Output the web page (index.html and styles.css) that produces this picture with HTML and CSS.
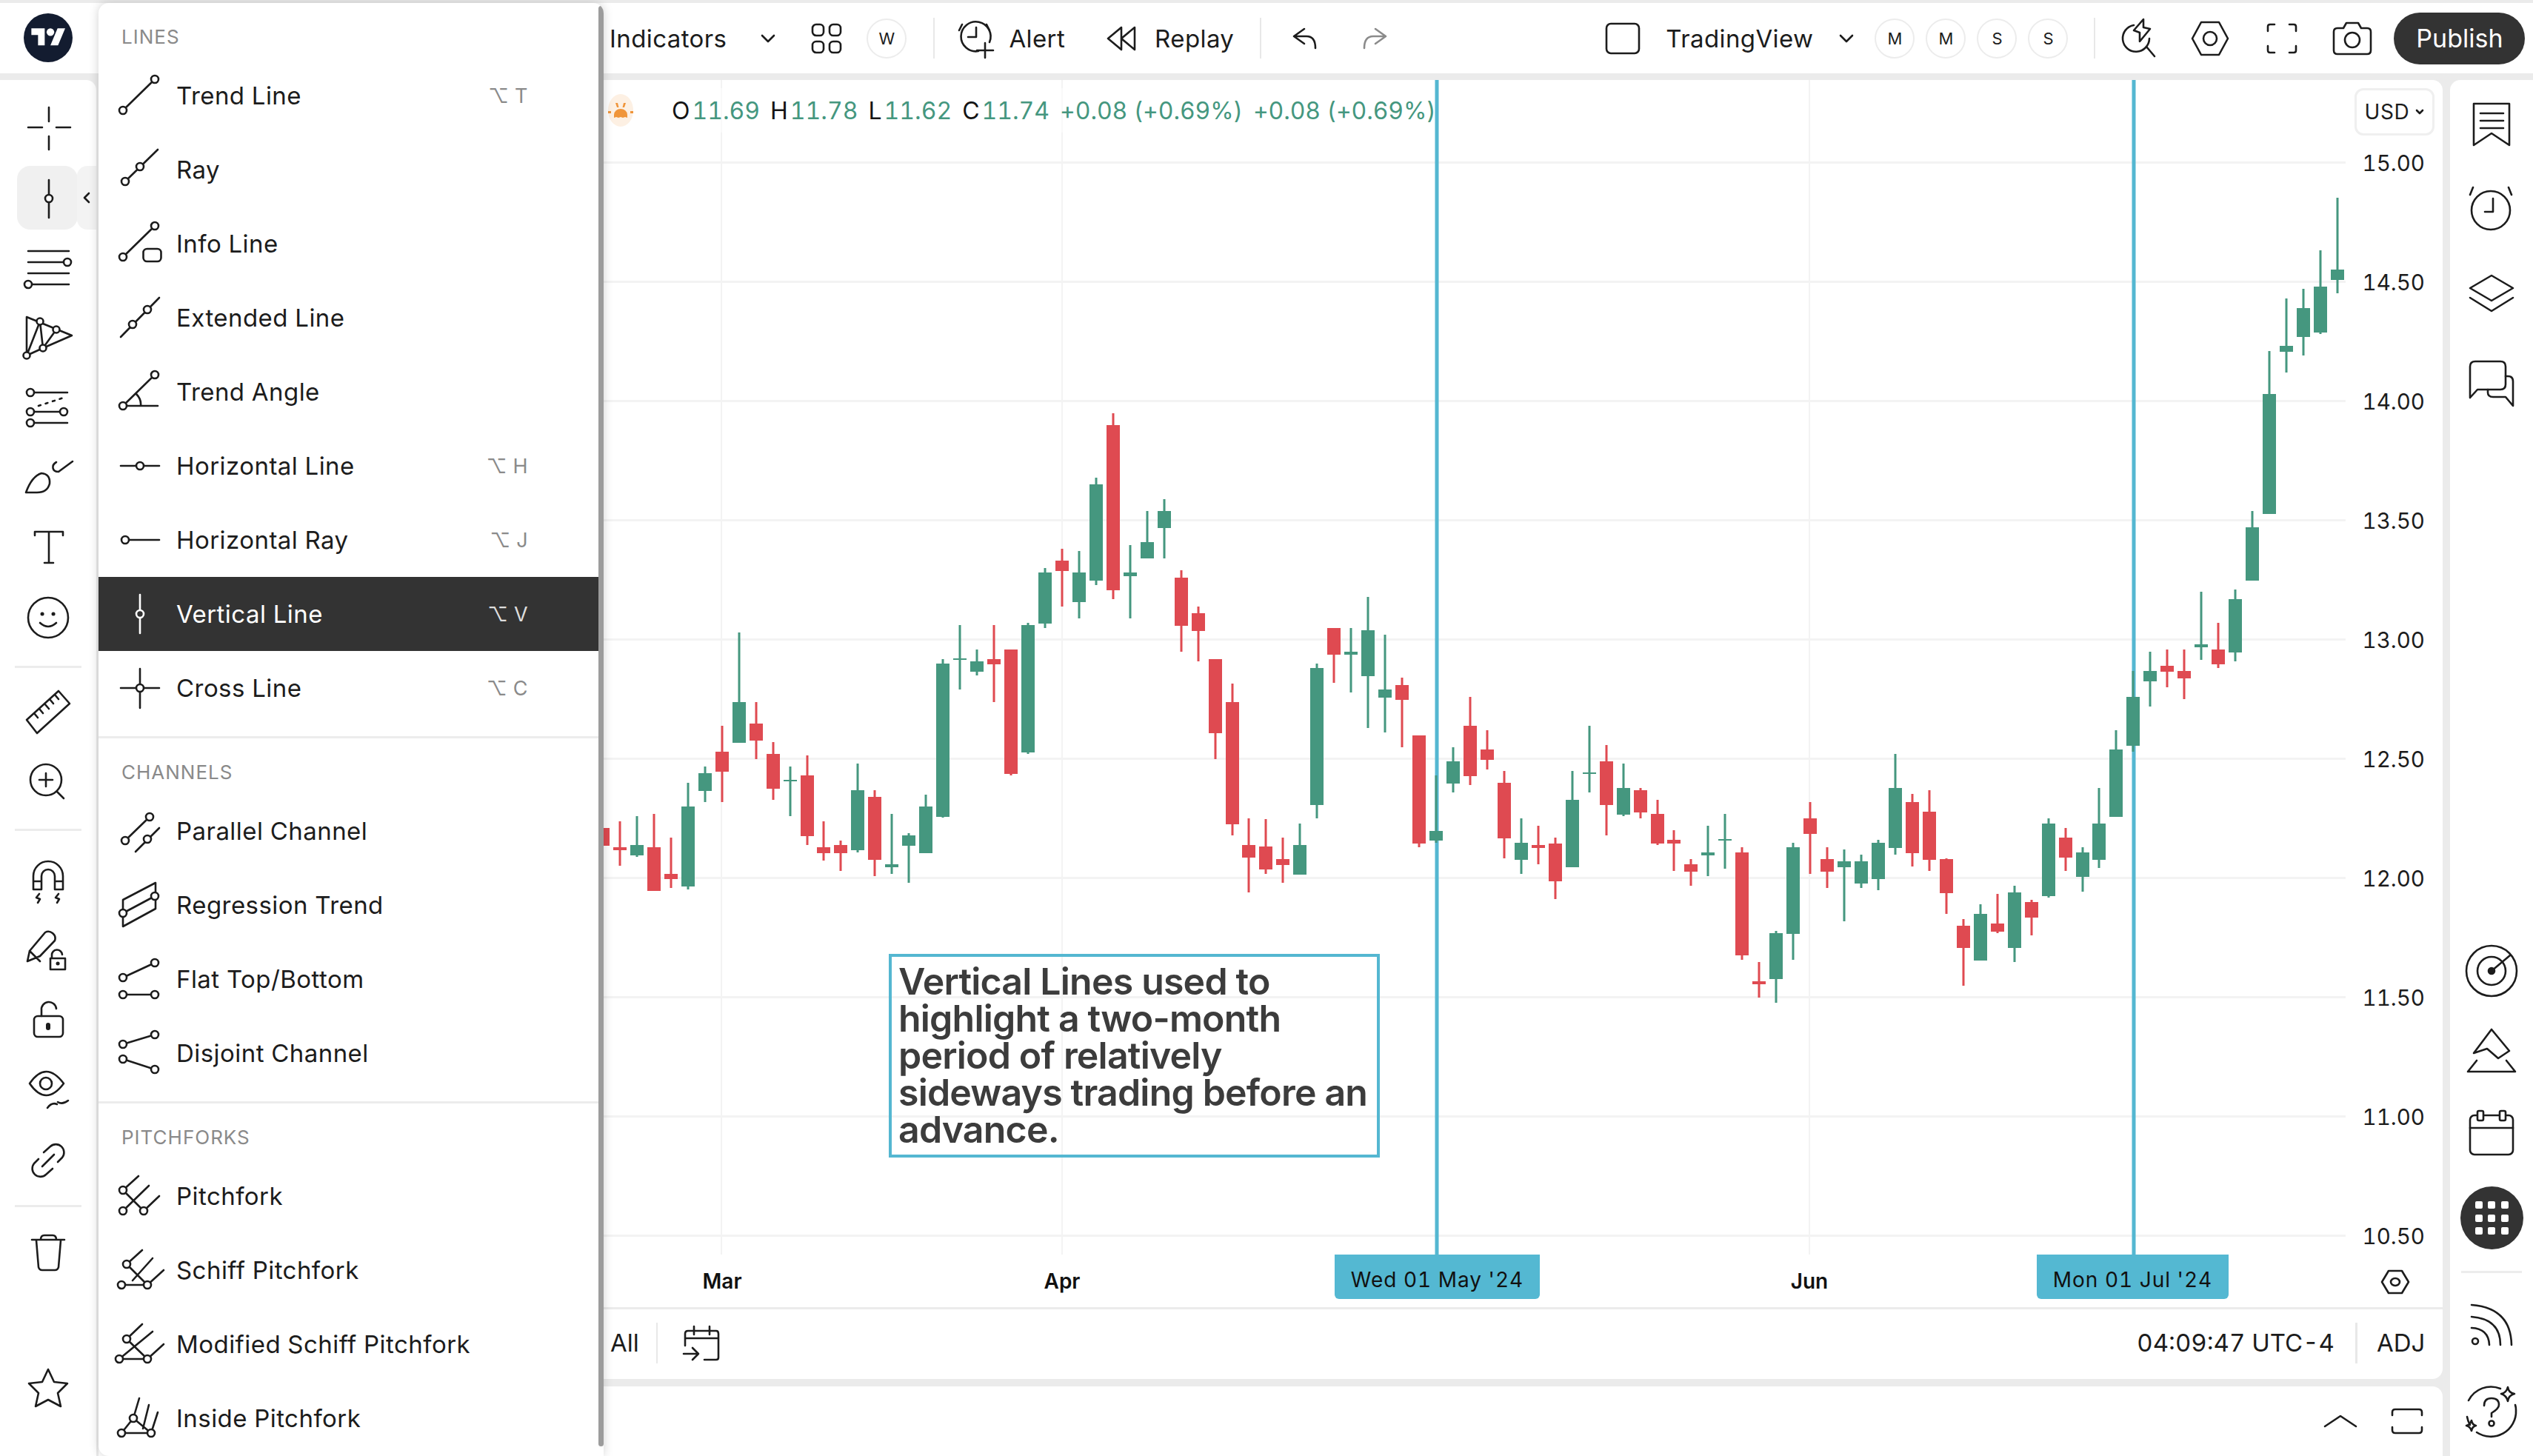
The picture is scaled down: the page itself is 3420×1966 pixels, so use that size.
FILE: index.html
```html
<!DOCTYPE html>
<html lang="en">
<head>
    <meta charset="UTF-8">
    <title>Drawing tools - Vertical Line</title>
    <link rel="stylesheet" href="styles.css">
</head>
<body>
<div class="app">
    <header class="top">
        <div class="logo-cell">
            <div class="logo">
                <svg viewBox="0 0 36 28" width="47" height="36"><path fill="#fff" d="M14 22H7V11H0V4h14v18zM28 22h-8l7.500-18h8L28 22z"/><circle fill="#fff" cx="20" cy="8" r="4"/></svg>
            </div>
        </div>
        <div class="topbar">
            <span class="tb-text indicators">Indicators</span>
            <svg class="ico chev-a" viewBox="0 0 20 12" width="20" height="12"><path d="M2 2l8 8 8-8"/></svg>
            <svg class="ico grid-ico" viewBox="0 0 42 42" width="42" height="42"><rect x="2" y="2" width="15" height="15" rx="5"/><rect x="25" y="2" width="15" height="15" rx="5"/><rect x="2" y="25" width="15" height="15" rx="5"/><rect x="25" y="25" width="15" height="15" rx="5"/></svg>
            <span class="pill-btn w-btn">W</span>
            <span class="tb-sep sep-a"></span>
            <svg class="ico alert-ico" viewBox="0 0 50 54" width="50" height="54"><path d="M27 44a20 20 0 1 1 15-12"/><path d="M24 12v13H13"/><path d="M5 8L1 16M38 8l4 8"/><path d="M25 43h22M36 33v20"/></svg>
            <span class="tb-text alert-label">Alert</span>
            <svg class="ico replay-ico" viewBox="0 0 40 34" width="40" height="34"><path d="M20 2L2 17l18 15zM38 2L20 17l18 15z"/></svg>
            <span class="tb-text replay-label">Replay</span>
            <span class="tb-sep sep-b"></span>
            <svg class="ico undo-ico" viewBox="0 0 34 30" width="34" height="30"><path d="M17 2L3 12l14 10M3 12h17q12 0 12 16"/></svg>
            <svg class="ico redo-ico" viewBox="0 0 34 30" width="34" height="30"><path d="M17 2l14 10-14 10M31 12H14q-12 0-12 16"/></svg>
            <svg class="ico square-ico" viewBox="0 0 48 44" width="48" height="44"><rect x="2" y="2" width="44" height="40" rx="6"/></svg>
            <span class="tb-text brand">TradingView</span>
            <svg class="ico chev-b" viewBox="0 0 20 12" width="20" height="12"><path d="M2 2l8 8 8-8"/></svg>
            <span class="pill-btn m-first">M</span>
            <span class="pill-btn">M</span>
            <span class="pill-btn">S</span>
            <span class="pill-btn">S</span>
            <span class="tb-sep sep-c"></span>
            <svg class="ico bolt-ico" viewBox="0 0 48 54" width="48" height="54"><path d="M17 9A18 18 0 1 0 38 27"/><path d="M30 1L17 16l8 3v12l14-17-9-2zM34 38l11 13"/></svg>
            <svg class="ico hex-ico" viewBox="0 0 52 48" width="52" height="48"><path d="M14 2h24l12 22-12 22H14L2 24z"/><circle cx="26" cy="24" r="9"/></svg>
            <svg class="ico full-ico" viewBox="0 0 42 42" width="42" height="42"><path d="M2 11V5q0-3 3-3h6M31 2h6q3 0 3 3v6M40 31v6q0 3-3 3h-6M11 40H5q-3 0-3-3v-6"/></svg>
            <svg class="ico cam-ico" viewBox="0 0 54 46" width="54" height="46"><path d="M15 9l4-7h16l4 7h8q5 0 5 5v25q0 5-5 5H7q-5 0-5-5V14q0-5 5-5z"/><circle cx="27" cy="25" r="10"/></svg>
            <button class="publish">Publish</button>
        </div>
    </header>

    <div class="main">
        <nav class="left-tools">
            <div class="tool-group group-a">
                <div class="tool"><svg class="ico" viewBox="0 0 64 64"><path d="M5 32h19M43 32h19M33 5v19M33 44v18"/></svg></div>
                <div class="tool is-active">
                    <svg class="ico" viewBox="0 0 64 64"><path d="M33 8v51"/><circle cx="33" cy="33" r="5"/></svg>
                    <span class="tool-tab"><svg class="ico" viewBox="0 0 12 16" width="12" height="16"><path d="M9 2L3 8l6 6"/></svg></span>
                </div>
                <div class="tool"><svg class="ico" viewBox="0 0 64 64"><path d="M5 10h55M5 25h54M5 40h55M5 55h55"/><circle cx="58" cy="25" r="5"/><circle cx="5" cy="55" r="5"/></svg></div>
                <div class="tool"><svg class="ico" viewBox="0 0 64 64"><path d="M3 56V4l61 25-39 17zM3 56L21 10 25 46 43 21"/><circle cx="21" cy="10" r="4.500"/><circle cx="43" cy="21" r="4.500"/><circle cx="25" cy="46" r="4.500"/><circle cx="3" cy="56" r="4.500"/></svg></div>
                <div class="tool"><svg class="ico" viewBox="0 0 64 64"><path d="M8 12h50M8 38h46M8 53h50"/><path stroke-dasharray="3 7" d="M19 30l37-12"/><circle cx="8" cy="12" r="5"/><circle cx="8" cy="38" r="5"/><circle cx="53" cy="38" r="5"/><circle cx="8" cy="53" r="5"/></svg></div>
                <div class="tool"><svg class="ico" viewBox="0 0 64 64"><path d="M2 52Q10 30 23 26 35 27 34 40 31 52 17 52zM43 11C36 15 37 24 46 24L65 10"/></svg></div>
                <div class="tool"><svg class="ico" viewBox="0 0 64 64"><path d="M14 16v-5h38v5M33 11v42M27 53h12"/></svg></div>
                <div class="tool"><svg class="ico" viewBox="0 0 64 64"><circle cx="32" cy="32" r="27"/><path d="M21 39q11 10 22 0"/><path class="solid" d="M24 27h.1M39 27h.1"/></svg></div>
            </div>
            <div class="tool-group group-b">
                <div class="tool"><svg class="ico" viewBox="0 0 64 64"><path d="M3 44L46 5l15 17-44 40zM13 35l5 6M20 29l5 6M27 22l6 7M34 16l5 6M41 10l5 6"/></svg></div>
                <div class="tool"><svg class="ico" viewBox="0 0 64 64"><circle cx="29" cy="30" r="21"/><path d="M44 46l9 9M29 21v18M20 30h18"/></svg></div>
            </div>
            <div class="tool-group group-c">
                <div class="tool"><svg class="ico" viewBox="0 0 64 64"><path d="M12 44V26a20 20 0 0 1 40 0v18H41V26a9 9 0 0 0-18 0v18zM12 33h11M41 33h11M20 50l-4 5 5 2-3 5M46 50l-4 5 5 2-3 5"/></svg></div>
                <div class="tool"><svg class="ico" viewBox="0 0 64 64"><path d="M4 46L7 32 28 7q5-3 10 1t3 10L21 39zM7 32l14 14M4 46l17-7M37 42v-4a7 7 0 0 1 14-1M35 42h20v15H35z"/><path class="solid" d="M45 49h.1"/></svg></div>
                <div class="tool"><svg class="ico" viewBox="0 0 64 64"><rect x="13" y="26" width="39" height="28" rx="5"/><path d="M23 26v-8a10 10 0 0 1 20-2"/><path class="solid thick" d="M32 38v4"/></svg></div>
                <div class="tool"><svg class="ico" viewBox="0 0 64 64"><path d="M7 22q22-32 46 0-24 32-46 0z"/><circle cx="29" cy="22" r="8"/><path d="M31 55q6-8 13-5M45 47q6 4 14-2"/></svg></div>
                <div class="tool"><svg class="ico" viewBox="0 0 64 64"><path d="M26 21l9-8a11 11 0 0 1 16 15l-6 6M38 43l-9 8a11 11 0 0 1-16-15l6-6M24 40l16-16"/></svg></div>
            </div>
            <div class="tool-group is-last">
                <div class="tool"><svg class="ico" viewBox="0 0 64 64"><path d="M10 14h44M16 15l3 36q1 4 5 4h17q4 0 5-4l3-36M22 14q0-6 5-6h11q5 0 5 6"/></svg></div>
            </div>
            <div class="tool tool-star"><svg class="ico" viewBox="0 0 64 64"><path d="M32 7l8 17 18 2-13 13 4 18-17-9-17 9 4-18L6 26l18-2z"/></svg></div>
        </nav>

        <div class="center">
            <section class="chart">
                <div class="plot">
                    <div class="pane" id="pane">
                        <svg class="pane-svg" id="paneSvg" viewBox="133 108 3034 1586" width="3034" height="1586"></svg>
                        <div class="legend">
                            <span class="sun">
                                <svg viewBox="0 0 34 20" width="34" height="20" fill="#f0953a"><path d="M8 20v-4a9 8 0 0 1 18 0v4l-3-1-3 1-3-1-3 1-3-1z"/><path d="M12 6L10 0h3l1.500 6zM22 6l2-6h-3l-1.500 6zM0 11h4v3H0zM30 11h4v3h-4z"/></svg>
                            </span>
                            <span class="ohlc"><b>O</b>11.69</span>
                            <span class="ohlc"><b>H</b>11.78</span>
                            <span class="ohlc"><b>L</b>11.62</span>
                            <span class="ohlc"><b>C</b>11.74</span>
                            <span class="ohlc chg">+0.08 (+0.69%)</span>
                            <span class="ohlc chg">+0.08 (+0.69%)</span>
                        </div>
                        <div class="note">Vertical Lines used to highlight a two-month period of relatively sideways trading before an advance.</div>
                    </div>
                    <div class="price-axis">
                        <button class="usd">USD <svg class="ico" viewBox="0 0 12 8" width="12" height="8"><path d="M2 2l4 4 4-4"/></svg></button>
                        <span class="price">15.00</span>
                        <span class="price">14.50</span>
                        <span class="price">14.00</span>
                        <span class="price">13.50</span>
                        <span class="price">13.00</span>
                        <span class="price">12.50</span>
                        <span class="price">12.00</span>
                        <span class="price">11.50</span>
                        <span class="price">11.00</span>
                        <span class="price">10.50</span>
                    </div>
                </div>
                <div class="time-axis">
                    <span class="month m-mar">Mar</span>
                    <span class="month m-apr">Apr</span>
                    <span class="month m-jun">Jun</span>
                    <span class="date-tag tag-may">Wed 01 May '24</span>
                    <span class="date-tag tag-jul">Mon 01 Jul '24</span>
                    <svg class="ico axis-gear" viewBox="0 0 40 34" width="40" height="34"><path d="M11 2h18l9 15-9 15H11L2 17z"/><ellipse cx="20" cy="17" rx="6" ry="5"/></svg>
                </div>
                <div class="range-bar">
                    <span class="range-all">All</span>
                    <svg class="ico range-ico" viewBox="0 0 50 48" width="50" height="48"><path d="M3 28V12q0-4 4-4h38q3 0 3 4v32q0 3-3 3H29M3 18h45M15 2v11M36 2v11M1 39h20M13 31l8 8-8 8"/></svg>
                    <span class="clock">04:09:47 UTC-4</span>
                    <span class="adj">ADJ</span>
                </div>
            </section>
            <section class="bottom-panel">
                <svg class="ico" viewBox="0 0 46 18" width="46" height="18"><path d="M2 16L23 2l21 14"/></svg>
                <svg class="ico" viewBox="0 0 44 36" width="44" height="36"><path d="M2 10V6q0-4 4-4h32q4 0 4 4v4M42 26v4q0 4-4 4H6q-4 0-4-4v-4"/></svg>
            </section>
        </div>

        <aside class="right-tools">
            <div class="side-btn s-notes"><svg class="ico" viewBox="0 0 64 64"><path d="M8 4h48v56L32 44 8 60zM17 17h31M17 27h31M17 37h31"/></svg></div>
            <div class="side-btn s-alarm"><svg class="ico" viewBox="0 0 64 64"><circle cx="31" cy="34" r="26"/><path d="M34 18v18H23M3 13L7 3M59 13L55 3"/></svg></div>
            <div class="side-btn s-layers"><svg class="ico" viewBox="0 0 64 64"><path d="M32 8l29 17-29 17L3 25zM3 38l29 18 29-18"/></svg></div>
            <div class="side-btn s-chat"><svg class="ico" viewBox="0 0 64 64"><path d="M3 53V11q0-7 7-7h34q7 0 7 7v24q0 7-7 7H13z"/><path d="M51 24h3q7 0 7 7v33L51 52H34q-7 0-7-6v-4"/></svg></div>
            <div class="side-spacer"></div>
            <div class="side-btn s-radar"><svg class="ico" viewBox="0 0 74 74"><circle cx="37" cy="37" r="34"/><circle cx="37" cy="37" r="19"/><circle class="dot" cx="37" cy="37" r="4"/><path d="M37 37l25-21"/></svg></div>
            <div class="side-btn s-ideas"><svg class="ico" viewBox="0 0 64 64"><path d="M32 3L8 35l18-6 15 13 15-10zM12 45L0 60h64L52 45"/></svg></div>
            <div class="side-btn s-cal"><svg class="ico" viewBox="0 0 64 64"><rect x="3" y="8" width="58" height="53" rx="6"/><path d="M3 25h58"/><rect class="tab" x="13" y="2" width="8" height="13" rx="2"/><rect class="tab" x="43" y="2" width="8" height="13" rx="2"/></svg></div>
            <div class="dots-btn">
                <i></i><i></i><i></i><i></i><i></i><i></i><i></i><i></i><i></i>
            </div>
            <div class="side-rule"></div>
            <div class="side-btn s-signal"><svg class="ico" viewBox="0 0 64 64"><path d="M5 36q23 1 24 23M5 21q39 3 39 38M5 5q53 4 54 54"/><circle cx="10" cy="54" r="4"/></svg></div>
            <div class="side-btn s-help"><svg class="ico" viewBox="0 0 76 76"><path d="M50 7A34 34 0 0 0 7 23M5 45q1 6 4 11M18 66a34 34 0 0 0 53-30q0-4-1-7"/><path d="M60 5q1 8 9 9-8 2-9 10-2-8-9-10 7-1 9-9zM11 50q1 6 6 7-5 1-6 7-2-6-7-7 5-1 7-7z"/><path d="M28 30q0-10 10-10t10 9q0 5-10 11v5"/><circle cx="38" cy="54" r="3.500"/></svg></div>
        </aside>
    </div>

    <!-- drawing tools flyout, lies over the chart -->
    <div class="flyout">
        <div class="menu">
            <div class="menu-section">
                <div class="menu-title">Lines</div>
                <div class="menu-row"><svg class="ico" viewBox="0 0 60 60"><path d="M8 50L51 8"/><circle cx="8" cy="50" r="5"/><circle cx="51" cy="8" r="5"/></svg><span class="row-name">Trend Line</span><span class="row-key">⌥ T</span></div>
                <div class="menu-row"><svg class="ico" viewBox="0 0 60 60"><path d="M11 46L55 3"/><circle cx="11" cy="46" r="5"/><circle cx="31" cy="26" r="5"/></svg><span class="row-name">Ray</span></div>
                <div class="menu-row"><svg class="ico" viewBox="0 0 60 60"><path d="M8 48L51 6"/><circle cx="8" cy="48" r="5"/><circle cx="51" cy="6" r="5"/><rect x="35.500" y="37" width="24" height="17" rx="5"/></svg><span class="row-name">Info Line</span></div>
                <div class="menu-row"><svg class="ico" viewBox="0 0 60 60"><path d="M5 56L57 3"/><circle cx="21" cy="39" r="5"/><circle cx="41" cy="19" r="5"/></svg><span class="row-name">Extended Line</span></div>
                <div class="menu-row"><svg class="ico" viewBox="0 0 60 60"><path d="M8 49L51 7M8 49h47M26 33q7 7 6 16"/><circle cx="8" cy="49" r="5"/><circle cx="51" cy="7" r="5"/></svg><span class="row-name">Trend Angle</span></div>
                <div class="menu-row"><svg class="ico" viewBox="0 0 60 60"><path d="M5 30h52"/><circle cx="31" cy="30" r="5"/></svg><span class="row-name">Horizontal Line</span><span class="row-key">⌥ H</span></div>
                <div class="menu-row"><svg class="ico" viewBox="0 0 60 60"><path d="M11 30h46"/><circle cx="11" cy="30" r="5"/></svg><span class="row-name">Horizontal Ray</span><span class="row-key">⌥ J</span></div>
                <div class="menu-row is-selected"><svg class="ico" viewBox="0 0 60 60"><path d="M31 4v52"/><circle cx="31" cy="30" r="5"/></svg><span class="row-name">Vertical Line</span><span class="row-key">⌥ V</span></div>
                <div class="menu-row"><svg class="ico" viewBox="0 0 60 60"><path d="M5 30h52M31 4v53"/><circle cx="31" cy="30" r="5"/></svg><span class="row-name">Cross Line</span><span class="row-key">⌥ C</span></div>
            </div>
            <div class="menu-section">
                <div class="menu-title">Channels</div>
                <div class="menu-row"><svg class="ico" viewBox="0 0 60 60"><path d="M11 43L44 11M25 58L57 26"/><circle cx="11" cy="43" r="5"/><circle cx="44" cy="11" r="5"/><circle cx="41" cy="41" r="5"/></svg><span class="row-name">Parallel Channel</span></div>
                <div class="menu-row"><svg class="ico" viewBox="0 0 60 60"><path d="M8 23L52 0v35L8 59zM8 41l43-23"/><circle cx="8" cy="41" r="5"/><circle cx="51" cy="18" r="5"/></svg><span class="row-name">Regression Trend</span></div>
                <div class="menu-row"><svg class="ico" viewBox="0 0 60 60"><path d="M8 28L51 8M8 51h43"/><circle cx="8" cy="28" r="5"/><circle cx="51" cy="8" r="5"/><circle cx="8" cy="51" r="5"/><circle cx="51" cy="51" r="5"/></svg><span class="row-name">Flat Top/Bottom</span></div>
                <div class="menu-row"><svg class="ico" viewBox="0 0 60 60"><path d="M8 18L51 5M8 38l43 14"/><circle cx="8" cy="18" r="5"/><circle cx="51" cy="5" r="5"/><circle cx="8" cy="38" r="5"/><circle cx="51" cy="52" r="5"/></svg><span class="row-name">Disjoint Channel</span></div>
            </div>
            <div class="menu-section is-last">
                <div class="menu-title">Pitchforks</div>
                <div class="menu-row"><svg class="ico" viewBox="0 0 60 60"><path d="M8 22L29 3M8 22l28 28M8 50l35-34M36 50l21-20"/><circle cx="8" cy="22" r="5"/><circle cx="8" cy="50" r="5"/><circle cx="36" cy="50" r="5"/></svg><span class="row-name">Pitchfork</span></div>
                <div class="menu-row"><svg class="ico" viewBox="0 0 60 60"><path d="M13 22L34 3M13 22l28 28M6 50h35M21 44L48 14M41 50l22-20"/><circle cx="13" cy="22" r="5"/><circle cx="6" cy="50" r="5"/><circle cx="41" cy="50" r="5"/></svg><span class="row-name">Schiff Pitchfork</span></div>
                <div class="menu-row"><svg class="ico" viewBox="0 0 60 60"><path d="M13 23L34 3M13 23l28 27M3 50h38M3 50l45-37M41 50l22-20"/><circle cx="13" cy="23" r="5"/><circle cx="3" cy="50" r="5"/><circle cx="41" cy="50" r="5"/></svg><span class="row-name">Modified Schiff Pitchfork</span></div>
                <div class="menu-row"><svg class="ico" viewBox="0 0 60 60"><path d="M6 50L22 30 46 50zM22 30l8-27M35 44l8-32M46 50l9-28"/><circle cx="22" cy="30" r="5"/><circle cx="6" cy="50" r="5"/><circle cx="46" cy="50" r="5"/></svg><span class="row-name">Inside Pitchfork</span></div>
            </div>
        </div>
        <div class="scroll-track"><span class="scroll-thumb"></span></div>
    </div>
</div>
<script src="chart.js"></script>
</body>
</html>
```

FILE: styles.css
```css
* {
    box-sizing: border-box;
}
html, body {
    margin: 0;
    padding: 0;
    height: 1966px;
    overflow: hidden;
}
body {
    width: 3420px;
    background: #ebebeb;
    color: #1c1c1c;
    font-family: Inter, 'Liberation Sans', sans-serif;
    font-variant-numeric: tabular-nums;
}
.ico {
    fill: none;
    stroke: #1c1c1c;
    stroke-width: 2.6;
    stroke-linecap: round;
    stroke-linejoin: round;
    overflow: visible;
    flex: none;
}
.ico circle, .ico ellipse, .ico .tab {
    fill: #fff;
}
.ico .dot {
    fill: #1c1c1c;
}
.ico .solid {
    stroke-width: 5;
}
.ico .thick {
    stroke-width: 6;
}
.app {
    position: relative;
    height: 1966px;
    padding-top: 4px;
    display: flex;
    flex-direction: column;
    gap: 9px;
}

/* top bar */
.top {
    height: 95px;
    display: flex;
    background: #fff;
    flex: none;
}
.logo-cell {
    width: 130px;
    display: flex;
    align-items: center;
    justify-content: center;
}
.logo {
    width: 66px;
    height: 66px;
    margin-top: -1px;
    border-radius: 50%;
    background: #131c30;
    display: flex;
    align-items: center;
    justify-content: center;
}
.topbar {
    flex: 1;
    display: flex;
    align-items: center;
    padding-left: 693px;
}
.tb-text {
    font-size: 33px;
    letter-spacing: 0.4px;
    white-space: nowrap;
}
.chev-a { margin-left: 46px; }
.grid-ico { margin-left: 48px; }
.pill-btn {
    width: 54px;
    height: 54px;
    border: 2px solid #ececec;
    border-radius: 50%;
    font-size: 22px;
    display: flex;
    align-items: center;
    justify-content: center;
    flex: none;
}
.pill-btn + .pill-btn { margin-left: 15px; }
.w-btn { margin-left: 33px; }
.tb-sep {
    width: 2px;
    height: 55px;
    background: #e8e8e8;
    flex: none;
}
.sep-a { margin-left: 36px; }
.alert-ico { margin-left: 32px; }
.alert-label { margin-left: 18px; }
.replay-ico { margin-left: 56px; }
.replay-label { margin-left: 25px; }
.sep-b { margin-left: 35px; }
.undo-ico { margin-left: 41px; }
.redo-ico { margin-left: 62px; stroke: #8b8b8b; }
.square-ico { margin-left: 293px; }
.brand { margin-left: 34px; }
.chev-b { margin-left: 35px; }
.m-first { margin-left: 28px; }
.sep-c { margin-left: 35px; }
.bolt-ico { margin-left: 35px; }
.hex-ico { margin-left: 46px; }
.full-ico { margin-left: 50px; }
.cam-ico { margin-left: 47px; }
.publish {
    margin-left: 29px;
    width: 177px;
    height: 70px;
    border: none;
    border-radius: 35px;
    background: #333;
    color: #fff;
    font-family: inherit;
    font-size: 34px;
    flex: none;
}

/* main row */
.main {
    flex: 1;
    min-height: 0;
    display: flex;
}
.left-tools {
    width: 130px;
    flex: none;
    background: #fff;
    border-top-right-radius: 14px;
    display: flex;
    flex-direction: column;
    padding-top: 17px;
}
.tool-group {
    position: relative;
}
.group-a {
    padding-bottom: 21px;
    margin-bottom: 11px;
}
.group-b {
    padding-bottom: 20px;
    margin-bottom: 18px;
}
.group-c {
    padding-top: 2px;
    padding-bottom: 15px;
    margin-bottom: 15px;
}
.tool-group::after {
    content: '';
    position: absolute;
    left: 20px;
    right: 20px;
    bottom: 0;
    height: 3px;
    background: #ececec;
}
.tool-group.is-last::after {
    display: none;
}
.tool {
    height: 94.5px;
    display: flex;
    align-items: center;
    justify-content: center;
    position: relative;
}
.tool svg:first-child {
    width: 64px;
    height: 64px;
}
.tool.is-active::before {
    content: '';
    position: absolute;
    left: 23px;
    width: 82px;
    top: 4px;
    bottom: 4px;
    background: #f0f0f0;
    border-radius: 18px;
}
.tool.is-active svg {
    position: relative;
}
.tool-tab {
    position: absolute;
    left: 104px;
    width: 26px;
    top: 4px;
    bottom: 4px;
    background: #f3f3f3;
    border-radius: 14px 0 0 14px;
    display: flex;
    align-items: center;
    justify-content: center;
}
.tool-tab svg {
    width: 12px !important;
    height: 16px !important;
}
.tool-star {
    margin-top: auto;
    margin-bottom: 45px;
}
.center {
    flex: 1;
    min-width: 0;
    margin-left: 3px;
    margin-right: 10px;
    display: flex;
    flex-direction: column;
    gap: 10px;
}
.chart {
    height: 1754px;
    flex: none;
    background: #fff;
    border-radius: 0 14px 14px 0;
    display: flex;
    flex-direction: column;
}
.plot {
    height: 1586px;
    flex: none;
    display: flex;
}
.pane {
    width: 3034px;
    position: relative;
    flex: none;
    overflow: hidden;
}
.pane-svg {
    display: block;
}
.legend {
    position: absolute;
    left: 682px;
    top: 11px;
    width: 1122px;
    height: 60px;
    background: rgba(255, 255, 255, 0.5);
    display: flex;
    align-items: center;
    font-size: 32px;
    color: #45977f;
    white-space: nowrap;
}
.sun {
    width: 44px;
    height: 44px;
    border-radius: 50%;
    background: #fdf0e3;
    display: flex;
    align-items: center;
    justify-content: center;
    margin-right: 52px;
    margin-left: 6px;
}
.ohlc {
    margin-right: 14px;
}
.ohlc b {
    font-weight: 400;
    color: #141414;
    margin-right: 3px;
}
.chg {
    letter-spacing: -0.1px;
}
.note {
    position: absolute;
    left: 1067px;
    top: 1180px;
    width: 663px;
    height: 275px;
    border: 4px solid #54b7d1;
    padding: 8px 0 8px 9px;
    font-size: 50px;
    line-height: 50px;
    font-weight: 600;
    font-variant-numeric: normal;
    letter-spacing: -0.8px;
    color: #3c3c3c;
    background: transparent;
}
.price-axis {
    flex: 1;
    position: relative;
    padding-top: 31px;
    padding-right: 24px;
    display: flex;
    flex-direction: column;
    align-items: flex-end;
}
.usd {
    position: absolute;
    left: 12px;
    top: 11px;
    width: 108px;
    height: 64px;
    background: #fff;
    border: 3px solid #efefef;
    border-radius: 12px;
    font-family: inherit;
    font-size: 28px;
    letter-spacing: 0.6px;
    color: #1c1c1c;
    display: flex;
    align-items: center;
    justify-content: center;
    gap: 8px;
    padding: 0;
}
.price {
    height: 161px;
    flex: none;
    font-size: 29.5px;
    display: flex;
    align-items: center;
}
.time-axis {
    height: 71px;
    flex: none;
    position: relative;
    border-bottom: 3px solid #ebebeb;
    box-sizing: content-box;
}
.month {
    position: absolute;
    top: 19px;
    font-size: 28px;
    font-weight: 600;
    transform: translateX(-50%);
    color: #111;
}
.m-mar { left: 842px; }
.m-apr { left: 1301px; }
.m-jun { left: 2310px; }
.date-tag {
    position: absolute;
    top: 0;
    height: 60px;
    padding-top: 17px;
    background: #54b8d2;
    border-radius: 0 0 6px 6px;
    font-size: 28px;
    line-height: 34px;
    letter-spacing: 1px;
    text-align: center;
    color: #111;
    white-space: nowrap;
}
.tag-may { left: 1669px; width: 277px; }
.tag-jul { left: 2617px; width: 259px; }
.axis-gear {
    position: absolute;
    left: 3081px;
    top: 20px;
}
.range-bar {
    height: 94px;
    flex: none;
    display: flex;
    align-items: center;
    padding-left: 691px;
    padding-bottom: 4px;
    font-size: 33px;
}
.range-all {
    width: 64px;
    height: 55px;
    line-height: 55px;
    border-right: 2px solid #e8e8e8;
    flex: none;
}
.range-ico {
    margin-left: 34px;
}
.clock {
    margin-left: auto;
    padding-right: 28px;
}
.adj {
    height: 55px;
    line-height: 55px;
    border-left: 3px solid #e8e8e8;
    padding-left: 26px;
    width: 118px;
}
.bottom-panel {
    flex: 1;
    background: #fff;
    border-top-right-radius: 14px;
    display: flex;
    align-items: center;
    justify-content: flex-end;
    padding-right: 26px;
    gap: 45px;
}
.right-tools {
    width: 112px;
    flex: none;
    background: #fff;
    border-top-left-radius: 14px;
    display: flex;
    flex-direction: column;
    align-items: center;
    padding-top: 28px;
}
.side-btn {
    width: 64px;
    height: 64px;
    flex: none;
}
.side-btn svg {
    width: 100%;
    height: 100%;
    display: block;
}
.s-notes, .s-alarm {
    margin-bottom: 50px;
}
.s-layers {
    margin-bottom: 56px;
}
.side-spacer {
    flex: 1;
}
.s-radar {
    width: 74px;
    height: 74px;
    margin-bottom: 39px;
}
.s-ideas {
    margin-bottom: 47px;
}
.s-cal {
    margin-bottom: 40px;
}
.dots-btn {
    width: 85px;
    height: 85px;
    flex: none;
    border-radius: 50%;
    background: #333;
    display: grid;
    grid-template-columns: repeat(3, 10px);
    grid-auto-rows: 10px;
    gap: 7.500px;
    align-content: center;
    justify-content: center;
}
.dots-btn i {
    background: #fff;
    border-radius: 2px;
}
.side-rule {
    width: 82px;
    height: 3px;
    margin: 29px 0 38px;
    background: #ececec;
    flex: none;
}
.s-help {
    width: 76px;
    height: 76px;
    margin-top: 47px;
    margin-bottom: 22px;
}

/* flyout */
.flyout {
    position: absolute;
    left: 133px;
    top: 4px;
    width: 682px;
    height: 1962px;
    background: #fff;
    border-radius: 14px 14px 0 14px;
    box-shadow: 0 0 14px rgba(0, 0, 0, 0.18);
    display: flex;
    overflow: hidden;
}
.menu {
    width: 675px;
    flex: none;
}
.menu-section {
    padding-bottom: 15px;
    border-bottom: 3px solid #ececec;
}
.menu-section.is-last {
    border-bottom: none;
}
.menu-title {
    height: 75px;
    padding: 31px 0 0 31px;
    font-size: 26px;
    line-height: 30px;
    letter-spacing: 1px;
    text-transform: uppercase;
    color: #8a8a8a;
}
.menu-row {
    height: 100px;
    padding: 0 95px 0 25px;
    display: flex;
    align-items: center;
    gap: 20px;
    font-size: 33px;
    letter-spacing: 0.45px;
}
.menu-row .ico {
    width: 60px;
    height: 60px;
}
.row-key {
    margin-left: auto;
    font-family: Inter, 'DejaVu Sans', sans-serif;
    font-size: 27px;
    color: #8a8a8a;
}
.is-selected {
    background: #333;
    color: #fff;
}
.is-selected .ico {
    stroke: #fff;
}
.is-selected .ico circle {
    fill: #333;
}
.is-selected .row-key {
    color: #ddd;
}
.scroll-track {
    width: 7px;
    flex: none;
    padding: 4px 0 13px;
    display: flex;
}
.scroll-thumb {
    width: 7px;
    background: #9c9c9c;
    border-radius: 4px;
}
```

FILE: chart.js
```js
// Candles of the daily chart, in page pixels:
// [wick top, body top, body bottom, wick bottom, colour]
const candles = [
    [1118, 1118, 1142, 1142, 'r'],
    [1109, 1144, 1148, 1169, 'r'], [1102, 1141, 1155, 1157, 'g'], [1099, 1144, 1203, 1203, 'r'],
    [1131, 1180, 1187, 1199, 'r'], [1057, 1089, 1197, 1201, 'g'], [1035, 1044, 1068, 1083, 'g'],
    [980, 1015, 1042, 1083, 'r'], [854, 948, 1003, 1003, 'g'], [948, 977, 1000, 1025, 'r'],
    [1002, 1018, 1065, 1080, 'r'], [1035, 1053, 1055, 1102, 'g'], [1020, 1047, 1129, 1141, 'r'],
    [1109, 1144, 1152, 1162, 'r'], [1135, 1141, 1152, 1176, 'r'], [1031, 1067, 1148, 1151, 'g'],
    [1067, 1076, 1161, 1183, 'r'], [1099, 1167, 1171, 1180, 'g'], [1125, 1128, 1142, 1192, 'g'],
    [1073, 1089, 1152, 1152, 'g'], [890, 896, 1103, 1104, 'g'], [844, 889, 891, 931, 'g'],
    [877, 893, 907, 912, 'g'], [844, 890, 897, 948, 'r'], [877, 877, 1045, 1047, 'r'],
    [841, 844, 1016, 1018, 'g'], [767, 773, 842, 848, 'g'], [741, 757, 771, 819, 'r'],
    [744, 773, 813, 835, 'g'], [645, 654, 784, 790, 'g'], [558, 574, 797, 809, 'r'],
    [736, 773, 778, 835, 'g'], [690, 732, 754, 754, 'g'], [674, 690, 713, 754, 'g'],
    [770, 780, 845, 880, 'r'], [819, 828, 852, 893, 'r'], [890, 890, 990, 1025, 'r'],
    [923, 948, 1113, 1128, 'r'], [1105, 1141, 1158, 1205, 'r'], [1106, 1143, 1174, 1180, 'r'],
    [1131, 1160, 1168, 1192, 'r'], [1112, 1141, 1181, 1181, 'g'], [896, 902, 1087, 1105, 'g'],
    [848, 848, 884, 922, 'r'], [848, 880, 884, 935, 'g'], [806, 851, 913, 983, 'g'],
    [857, 931, 942, 989, 'g'], [915, 925, 945, 1009, 'r'], [993, 993, 1139, 1144, 'r'],
    [1047, 1122, 1135, 1138, 'g'], [1009, 1028, 1058, 1070, 'g'], [941, 980, 1048, 1060, 'r'],
    [986, 1012, 1026, 1039, 'r'], [1041, 1057, 1132, 1159, 'r'], [1105, 1138, 1161, 1180, 'g'],
    [1115, 1141, 1145, 1167, 'r'], [1131, 1139, 1190, 1214, 'r'], [1041, 1080, 1171, 1171, 'g'],
    [980, 1043, 1045, 1070, 'g'], [1006, 1028, 1087, 1128, 'r'], [1031, 1064, 1100, 1102, 'g'],
    [1064, 1067, 1097, 1105, 'r'], [1080, 1099, 1139, 1141, 'r'], [1121, 1134, 1139, 1176, 'r'],
    [1160, 1167, 1177, 1196, 'r'], [1115, 1151, 1155, 1183, 'g'], [1099, 1133, 1135, 1173, 'g'],
    [1144, 1151, 1290, 1296, 'r'], [1299, 1325, 1329, 1347, 'r'], [1257, 1260, 1322, 1354, 'g'],
    [1138, 1144, 1261, 1296, 'g'], [1083, 1105, 1126, 1180, 'r'], [1144, 1160, 1177, 1199, 'r'],
    [1147, 1163, 1171, 1244, 'g'], [1154, 1163, 1193, 1199, 'g'], [1134, 1138, 1187, 1202, 'g'],
    [1018, 1064, 1145, 1154, 'g'], [1072, 1083, 1152, 1170, 'r'], [1067, 1096, 1161, 1176, 'r'],
    [1159, 1160, 1206, 1234, 'r'], [1241, 1250, 1280, 1331, 'r'], [1221, 1234, 1297, 1297, 'g'],
    [1207, 1247, 1258, 1260, 'r'], [1196, 1205, 1280, 1299, 'g'], [1215, 1218, 1239, 1263, 'r'],
    [1105, 1112, 1210, 1212, 'g'], [1118, 1131, 1158, 1176, 'r'], [1144, 1151, 1184, 1204, 'g'],
    [1064, 1112, 1161, 1172, 'g'], [986, 1012, 1103, 1103, 'g'], [906, 941, 1007, 1015, 'g'],
    [880, 906, 920, 954, 'g'], [877, 899, 907, 928, 'r'], [877, 906, 916, 944, 'r'],
    [799, 870, 874, 891, 'g'], [841, 877, 897, 902, 'r'], [796, 809, 881, 893, 'g'],
    [690, 712, 784, 784, 'g'], [474, 532, 694, 694, 'g'], [403, 467, 475, 503, 'g'],
    [390, 416, 455, 480, 'g'], [338, 387, 449, 451, 'g'], [267, 364, 378, 396, 'g']
];

const svg = document.getElementById('paneSvg');
const SVG_NS = 'http://www.w3.org/2000/svg';
const colors = { g: '#45977f', r: '#df4a51' };

function addRect(x, y, w, h, fill) {
    const rect = document.createElementNS(SVG_NS, 'rect');
    rect.setAttribute('x', x);
    rect.setAttribute('y', y);
    rect.setAttribute('width', w);
    rect.setAttribute('height', h);
    rect.setAttribute('fill', fill);
    svg.appendChild(rect);
}

// price grid, one line per 50 cents
for (let i = 0; i < 10; i++) {
    addRect(133, Math.round(218 + i * 161), 3034, 3, '#f3f3f3');
}
// month grid
[974, 1434, 2443].forEach(x => addRect(x - 1, 108, 2, 1586, '#f3f3f3'));

// the two vertical lines from the note
[1940, 2881].forEach(x => addRect(x - 2.5, 108, 5, 1586, '#54b7d1'));

candles.forEach((c, i) => {
    const x = Math.round(814 + i * 22.96);
    const fill = colors[c[4]];
    addRect(x - 1.5, c[0], 3, c[3] - c[0], fill);
    addRect(x - 9, c[1], 18, c[2] - c[1], fill);
});
```
